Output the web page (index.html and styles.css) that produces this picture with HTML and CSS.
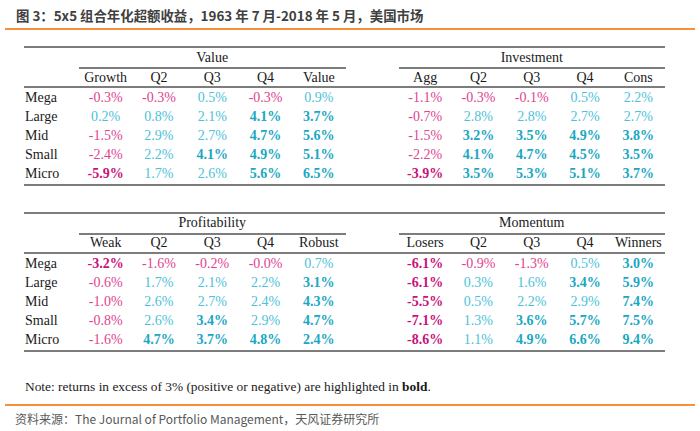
FILE: index.html
```html
<!DOCTYPE html>
<html lang="zh">
<head>
<meta charset="utf-8">
<link rel="stylesheet" href="styles.css">
</head>
<body>
<div class="page">
  <div class="title">图 3：5x5 组合年化超额收益，1963 年 7 月-2018 年 5 月，美国市场</div>

  <table class="grid first">
    <colgroup><col class="c-label"><col span="5" class="c-num"><col class="c-gap"><col span="5" class="c-num"></colgroup>
    <tr class="group"><td></td><td colspan="5" class="gh">Value</td><td></td><td colspan="5" class="gh">Investment</td></tr>
    <tr class="head"><td></td><td>Growth</td><td>Q2</td><td>Q3</td><td>Q4</td><td>Value</td><td></td><td>Agg</td><td>Q2</td><td>Q3</td><td>Q4</td><td>Cons</td></tr>
    <tr><td class="lab">Mega</td><td class="n">-0.3%</td><td class="n">-0.3%</td><td class="p">0.5%</td><td class="n">-0.3%</td><td class="p">0.9%</td><td></td><td class="n">-1.1%</td><td class="n">-0.3%</td><td class="n">-0.1%</td><td class="p">0.5%</td><td class="p">2.2%</td></tr>
    <tr><td class="lab">Large</td><td class="p">0.2%</td><td class="p">0.8%</td><td class="p">2.1%</td><td class="p b">4.1%</td><td class="p b">3.7%</td><td></td><td class="n">-0.7%</td><td class="p">2.8%</td><td class="p">2.8%</td><td class="p">2.7%</td><td class="p">2.7%</td></tr>
    <tr><td class="lab">Mid</td><td class="n">-1.5%</td><td class="p">2.9%</td><td class="p">2.7%</td><td class="p b">4.7%</td><td class="p b">5.6%</td><td></td><td class="n">-1.5%</td><td class="p b">3.2%</td><td class="p b">3.5%</td><td class="p b">4.9%</td><td class="p b">3.8%</td></tr>
    <tr><td class="lab">Small</td><td class="n">-2.4%</td><td class="p">2.2%</td><td class="p b">4.1%</td><td class="p b">4.9%</td><td class="p b">5.1%</td><td></td><td class="n">-2.2%</td><td class="p b">4.1%</td><td class="p b">4.7%</td><td class="p b">4.5%</td><td class="p b">3.5%</td></tr>
    <tr class="last"><td class="lab">Micro</td><td class="n b">-5.9%</td><td class="p">1.7%</td><td class="p">2.6%</td><td class="p b">5.6%</td><td class="p b">6.5%</td><td></td><td class="n b">-3.9%</td><td class="p b">3.5%</td><td class="p b">5.3%</td><td class="p b">5.1%</td><td class="p b">3.7%</td></tr>
  </table>

  <table class="grid second">
    <colgroup><col class="c-label"><col span="5" class="c-num"><col class="c-gap"><col span="5" class="c-num"></colgroup>
    <tr class="group"><td></td><td colspan="5" class="gh">Profitability</td><td></td><td colspan="5" class="gh">Momentum</td></tr>
    <tr class="head"><td></td><td>Weak</td><td>Q2</td><td>Q3</td><td>Q4</td><td>Robust</td><td></td><td>Losers</td><td>Q2</td><td>Q3</td><td>Q4</td><td>Winners</td></tr>
    <tr><td class="lab">Mega</td><td class="n b">-3.2%</td><td class="n">-1.6%</td><td class="n">-0.2%</td><td class="n">-0.0%</td><td class="p">0.7%</td><td></td><td class="n b">-6.1%</td><td class="n">-0.9%</td><td class="n">-1.3%</td><td class="p">0.5%</td><td class="p b">3.0%</td></tr>
    <tr><td class="lab">Large</td><td class="n">-0.6%</td><td class="p">1.7%</td><td class="p">2.1%</td><td class="p">2.2%</td><td class="p b">3.1%</td><td></td><td class="n b">-6.1%</td><td class="p">0.3%</td><td class="p">1.6%</td><td class="p b">3.4%</td><td class="p b">5.9%</td></tr>
    <tr><td class="lab">Mid</td><td class="n">-1.0%</td><td class="p">2.6%</td><td class="p">2.7%</td><td class="p">2.4%</td><td class="p b">4.3%</td><td></td><td class="n b">-5.5%</td><td class="p">0.5%</td><td class="p">2.2%</td><td class="p">2.9%</td><td class="p b">7.4%</td></tr>
    <tr><td class="lab">Small</td><td class="n">-0.8%</td><td class="p">2.6%</td><td class="p b">3.4%</td><td class="p">2.9%</td><td class="p b">4.7%</td><td></td><td class="n b">-7.1%</td><td class="p">1.3%</td><td class="p b">3.6%</td><td class="p b">5.7%</td><td class="p b">7.5%</td></tr>
    <tr class="last"><td class="lab">Micro</td><td class="n">-1.6%</td><td class="p b">4.7%</td><td class="p b">3.7%</td><td class="p b">4.8%</td><td class="p b">2.4%</td><td></td><td class="n b">-8.6%</td><td class="p">1.1%</td><td class="p b">4.9%</td><td class="p b">6.6%</td><td class="p b">9.4%</td></tr>
  </table>

  <p class="note">Note: returns in excess of 3% (positive or negative) are highlighted in <b>bold</b>.</p>

  <div class="source">资料来源：The Journal of Portfolio Management，天风证券研究所</div>
</div>
</body>
</html>
```

FILE: styles.css
```css
html, body {
  margin: 0;
  padding: 0;
  background: #ffffff;
}

.page {
  width: 700px;
  height: 431px;
  overflow: hidden;
  box-sizing: border-box;
}

.title {
  margin: 0 5px;
  padding: 6px 0 0 11px;
  height: 22px;
  border-bottom: 2px solid #f4913a;
  font-family: "Noto Sans CJK SC", "Noto Sans", sans-serif;
  font-weight: 700;
  font-size: 13.4px;
  line-height: 18px;
  color: #404040;
}

.grid {
  margin-left: 24px;
  border-collapse: collapse;
  table-layout: fixed;
  width: 641px;
  font-family: "Liberation Serif", "Times New Roman", serif;
  font-size: 14px;
  color: #1a1a1a;
  border-top: 2px solid #7d7d7d;
  border-bottom: 2px solid #7d7d7d;
}

.first {
  margin-top: 16px;
}

.second {
  margin-top: 26px;
}

.c-label { width: 55px; }
.c-num { width: 53.3px; }
.c-gap { width: 53px; }

.grid td {
  padding: 0;
  text-align: center;
  line-height: 16px;
  white-space: nowrap;
}

.group td {
  height: 19px;
}

.group .gh {
  border-bottom: 2px solid #7d7d7d;
}

.head td {
  height: 17px;
  border-bottom: 2px solid #7d7d7d;
}

.grid tr:not(.group):not(.head) td {
  height: 19.2px;
}

.grid td.lab {
  text-align: left;
  padding-left: 1px;
}

.n { color: #e0448f; }
.p { color: #4cc2d8; }
.n.b { color: #c9127a; font-weight: 700; }
.p.b { color: #1aa7c3; font-weight: 700; }

.note {
  margin: 26px 0 0 25px;
  font-family: "Liberation Serif", "Times New Roman", serif;
  font-size: 13.4px;
  line-height: 18px;
  color: #1a1a1a;
}

.source {
  margin: 8px 5px 0;
  padding: 4px 0 0 10px;
  border-top: 2px solid #f4913a;
  font-family: "Noto Sans CJK SC", "Noto Sans", sans-serif;
  font-size: 12px;
  line-height: 18px;
  color: #595959;
}
```
